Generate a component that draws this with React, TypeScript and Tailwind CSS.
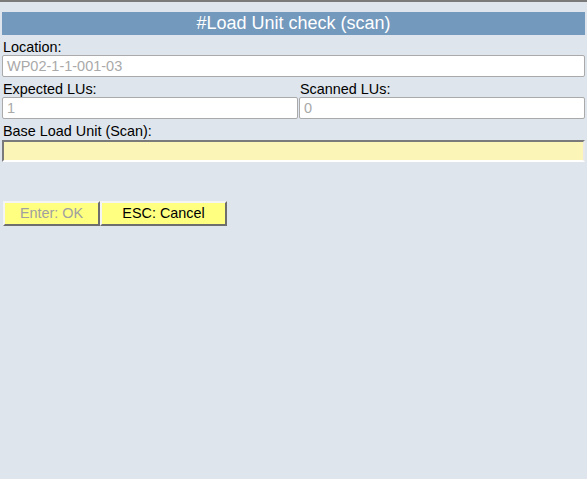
export default function App() {
  return (
    <div
      className="min-h-[479px] h-[479px] bg-[#dee5ec] border-t-2 border-[#7a7a7a] text-[14.4px] text-black overflow-hidden"
      style={{ fontFamily: '"Liberation Sans", Arial, sans-serif' }}
    >
      <div className="px-[2px] pt-[10px]">
        <div className="h-[23px] bg-[#7399bd] text-white text-[18px] leading-[23px] text-center">
          #Load Unit check (scan)
        </div>

        <div className="h-[20px] leading-[20px] pt-[2px] pl-px">Location:</div>
        <div className="h-[22px] bg-white border border-[#aaaaaa] rounded-[2px] pl-[4px] leading-[20px] text-[14.5px] text-[#a9a9a9]">
          WP02-1-1-001-03
        </div>

        <div className="flex gap-px">
          <div className="w-[296px]">
            <div className="h-[20px] leading-[20px] pt-[2px] pl-px">Expected LUs:</div>
            <div className="h-[22px] bg-white border border-[#aaaaaa] rounded-[2px] pl-[4px] leading-[20px] text-[14.5px] text-[#a9a9a9]">
              1
            </div>
          </div>
          <div className="flex-1">
            <div className="h-[20px] leading-[20px] pt-[2px] pl-px">Scanned LUs:</div>
            <div className="h-[22px] bg-white border border-[#aaaaaa] rounded-[2px] pl-[4px] leading-[20px] text-[14.5px] text-[#a9a9a9]">
              0
            </div>
          </div>
        </div>

        <div className="h-[21px] leading-[21px] pt-[2px] pl-px">Base Load Unit (Scan):</div>
        <div className="h-[22px] bg-[#fbf5b8] border-2 border-t-[#7a7a7a] border-l-[#7a7a7a] border-b-white border-r-[#e8e8e8]" />

        <div className="flex pt-[39px] pl-px">
          <div className="w-[97px] h-[25px] bg-[#ffff80] border-2 border-t-[#f4f4f4] border-l-[#f4f4f4] border-b-[#6e6e6e] border-r-[#6e6e6e] text-center leading-[21px] text-[#a0a0a0]">
            Enter: OK
          </div>
          <div className="w-[127px] h-[25px] bg-[#ffff80] border-2 border-t-[#f4f4f4] border-l-[#f4f4f4] border-b-[#6e6e6e] border-r-[#6e6e6e] text-center leading-[21px]">
            ESC: Cancel
          </div>
        </div>
      </div>
    </div>
  );
}
